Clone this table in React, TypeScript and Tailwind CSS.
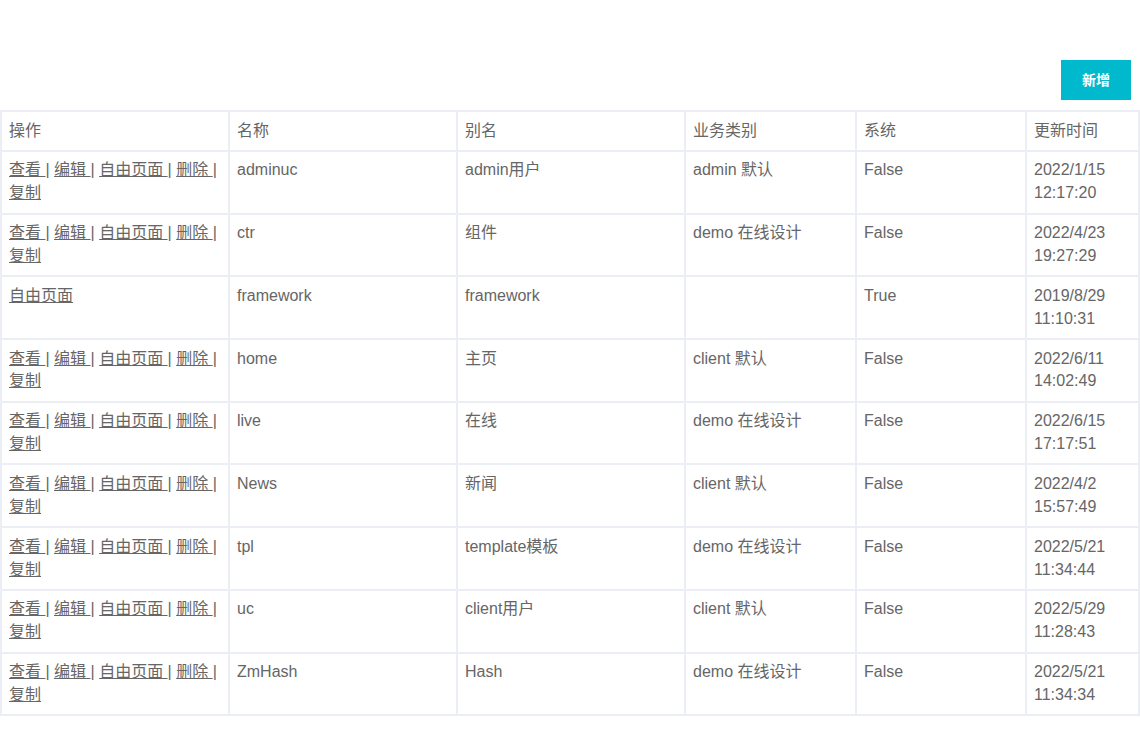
const rows = [
  { ops: true, name: "adminuc", alias: "admin用户", cat: "admin 默认", sys: "False", date: "2022/1/15", time: "12:17:20" },
  { ops: true, name: "ctr", alias: "组件", cat: "demo 在线设计", sys: "False", date: "2022/4/23", time: "19:27:29" },
  { ops: false, name: "framework", alias: "framework", cat: "", sys: "True", date: "2019/8/29", time: "11:10:31" },
  { ops: true, name: "home", alias: "主页", cat: "client 默认", sys: "False", date: "2022/6/11", time: "14:02:49" },
  { ops: true, name: "live", alias: "在线", cat: "demo 在线设计", sys: "False", date: "2022/6/15", time: "17:17:51" },
  { ops: true, name: "News", alias: "新闻", cat: "client 默认", sys: "False", date: "2022/4/2", time: "15:57:49" },
  { ops: true, name: "tpl", alias: "template模板", cat: "demo 在线设计", sys: "False", date: "2022/5/21", time: "11:34:44" },
  { ops: true, name: "uc", alias: "client用户", cat: "client 默认", sys: "False", date: "2022/5/29", time: "11:28:43" },
  { ops: true, name: "ZmHash", alias: "Hash", cat: "demo 在线设计", sys: "False", date: "2022/5/21", time: "11:34:34" },
];

const headers = ["操作", "名称", "别名", "业务类别", "系统", "更新时间"];
const widths = ["w-[228px]", "w-[228px]", "w-[228px]", "w-[171px]", "w-[170px]", ""];

function Cell({ children, w }: { children?: React.ReactNode; w?: string }) {
  return (
    <td className={`border-2 border-[#eceef5] px-[7px] py-[7.5px] align-top ${w ?? ""}`}>
      {children}
    </td>
  );
}

function Ops() {
  return (
    <>
      <a href="#" className="underline">查看 </a>| <a href="#" className="underline">编辑 </a>|{" "}
      <a href="#" className="underline">自由页面 </a>| <a href="#" className="underline">删除 </a>|{" "}
      <a href="#" className="underline">复制</a>
    </>
  );
}

export default function App() {
  return (
    <div className="min-h-[736px] bg-white pt-[60px] text-[16px] leading-[22.86px] text-[#666] [font-family:'Liberation_Sans','Noto_Sans_CJK_SC',sans-serif]">
      <div className="flex justify-end pr-[9px]">
        <button className="h-10 w-[70px] bg-[#00b9cd] text-[14px] font-bold text-white">
          新增
        </button>
      </div>
      <table className="mt-[10px] w-[1140px] table-fixed border-collapse">
        <thead>
          <tr>
            {headers.map((h, i) => (
              <Cell key={h} w={widths[i]}>
                {h}
              </Cell>
            ))}
          </tr>
        </thead>
        <tbody>
          {rows.map((r) => (
            <tr key={r.name}>
              <Cell>{r.ops ? <Ops /> : <a href="#" className="underline">自由页面</a>}</Cell>
              <Cell>{r.name}</Cell>
              <Cell>{r.alias}</Cell>
              <Cell>{r.cat}</Cell>
              <Cell>{r.sys}</Cell>
              <Cell>
                {r.date}
                <br />
                {r.time}
              </Cell>
            </tr>
          ))}
        </tbody>
      </table>
    </div>
  );
}
